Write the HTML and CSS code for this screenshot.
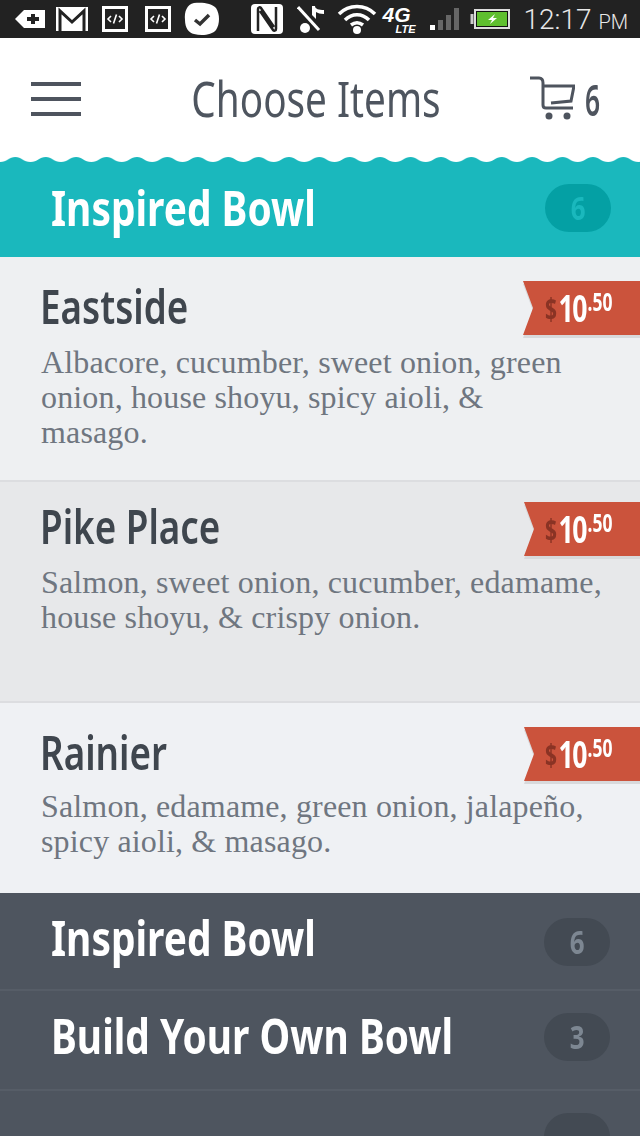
FILE: index.html
```html
<!DOCTYPE html>
<html lang="en">
<head>
    <meta charset="UTF-8">
    <meta name="viewport" content="width=device-width, initial-scale=1.0">
    <title>Choose Items</title>
    <link rel="stylesheet" href="styles.css">
</head>
<body>
    <div class="status">
        <div class="status-left">
            <svg class="ic-tag" width="32" height="22" viewBox="0 0 32 22"><path d="M1 11 10 2H31V20H10Z" fill="#fff"/><path d="M17 6h4v3h4v4h-4v3h-4v-3h-4V9h4z" fill="#222"/></svg>
            <svg class="ic-mail" width="32" height="26" viewBox="0 0 32 26"><rect width="32" height="24" y="1" fill="#fff"/><path d="M4 25V5L16 16 28 5V25" fill="none" stroke="#222" stroke-width="3"/></svg>
            <svg class="ic-code" width="26" height="26" viewBox="0 0 26 26"><rect x="1.500" y="1.500" width="23" height="23" fill="#222" stroke="#fff" stroke-width="3"/><path d="M9 10 6 13l3 3M17 10l3 3-3 3M14.500 8.500l-3 9" fill="none" stroke="#fff" stroke-width="1.600"/></svg>
            <svg class="ic-code2" width="26" height="26" viewBox="0 0 26 26"><rect x="1.500" y="1.500" width="23" height="23" fill="#222" stroke="#fff" stroke-width="3"/><path d="M9 10 6 13l3 3M17 10l3 3-3 3M14.500 8.500l-3 9" fill="none" stroke="#fff" stroke-width="1.600"/></svg>
            <svg class="ic-skype" width="36" height="34" viewBox="0 0 36 34"><path d="M10 1C18 0 28 1 32 6 36 12 36 22 32 28 28 33 18 34 10 32 5 31 1 26 1 18 0 10 3 2 10 1Z" fill="#fff"/><path d="M11 18l5 4 9-9" fill="none" stroke="#333" stroke-width="3.500"/></svg>
            <svg class="ic-nfc" width="34" height="32" viewBox="0 0 34 32"><rect x="1" y="1" width="32" height="30" rx="4" fill="#fff"/><path d="M8 28V6c0-2 2-2 3-1L24 24M26 4V26c0 2-2 2-3 1L10 8" fill="none" stroke="#222" stroke-width="2.500"/></svg>
            <svg class="ic-note" width="28" height="30" viewBox="0 0 28 30"><path d="M1 3 22 26" stroke="#fff" stroke-width="3"/><path d="M15 11V2h3c0 3 4 4 9 4v4c-4 0-6-1-8-2v7z" fill="#fff"/><circle cx="8" cy="24" r="5" fill="#fff"/></svg>
        </div>
        <div class="status-right">
            <svg class="wifi" width="40" height="30" viewBox="0 0 40 30"><path d="M2 10C12 0 28 0 38 10M8 16C15 9 25 9 32 16M14 21C18 18 22 18 26 21" fill="none" stroke="#fff" stroke-width="3.500"/><circle cx="20" cy="26" r="4" fill="#fff"/></svg>
            <div class="net"><span class="net-g">4G</span><span class="net-lte">LTE</span></div>
            <svg class="bars" width="36" height="26" viewBox="0 0 36 26"><rect x="1" y="19" width="5" height="5" fill="#fff"/><rect x="9" y="14" width="5" height="10" fill="#666"/><rect x="17" y="9" width="5" height="15" fill="#666"/><rect x="25" y="2" width="5" height="22" fill="#666"/></svg>
            <svg class="batt" width="40" height="20" viewBox="0 0 40 20"><path d="M2 5V15" stroke="#ccc" stroke-width="3"/><rect x="5" y="1" width="34" height="18" fill="#111" stroke="#ddd" stroke-width="2"/><rect x="7" y="3" width="30" height="14" fill="#5fbf2f"/><path d="M25 5 18 11h4l-2 4 7-6h-4z" fill="#fff"/></svg>
            <span class="time">12:17 <small>PM</small></span>
        </div>
    </div>

    <header class="topbar">
        <div class="burger"><i></i><i></i><i></i></div>
        <h1 class="cond title">Choose Items</h1>
        <div class="cart">
            <svg width="46" height="46" viewBox="0 0 46 46"><path d="M1 2H10C13 2 14 4 14 7V29C14 31 15 32 17 32H44M14 10H45L42 25 22 27" fill="none" stroke="#4e545e" stroke-width="3"/><circle cx="20" cy="40" r="3.500" fill="#4e545e"/><circle cx="38" cy="40" r="3.500" fill="#4e545e"/></svg>
            <span class="cart-count"><span class="cond">6</span></span>
        </div>
    </header>

    <section class="cat cat-active">
        <svg class="wave" width="640" height="6" viewBox="0 0 640 6">
            <defs>
                <pattern id="scallop" width="30.400" height="6" patternUnits="userSpaceOnUse" x="-15">
                    <path d="M0 0H30.400C24 0 22 5 15.200 5 8 5 6 0 0 0Z" fill="#fff"/>
                </pattern>
            </defs>
            <rect width="640" height="6" fill="url(#scallop)"/>
        </svg>
        <h2 class="cond cat-name">Inspired Bowl</h2>
        <span class="pill"><span class="cond">6</span></span>
    </section>

    <article class="item item-1">
        <div class="tag"><div class="price"><span class="cond amount"><span class="dollar">$</span><span class="big">10</span><span class="cents">.50</span></span></div></div>
        <h3 class="cond item-name">Eastside</h3>
        <p class="desc">Albacore, cucumber, sweet onion, green onion, house shoyu, spicy aioli, &amp; masago.</p>
    </article>
    <article class="item item-2">
        <div class="tag"><div class="price"><span class="cond amount"><span class="dollar">$</span><span class="big">10</span><span class="cents">.50</span></span></div></div>
        <h3 class="cond item-name">Pike Place</h3>
        <p class="desc">Salmon, sweet onion, cucumber, edamame, house shoyu, &amp; crispy onion.</p>
    </article>
    <article class="item item-3">
        <div class="tag"><div class="price"><span class="cond amount"><span class="dollar">$</span><span class="big">10</span><span class="cents">.50</span></span></div></div>
        <h3 class="cond item-name">Rainier</h3>
        <p class="desc">Salmon, edamame, green onion, jalapeño, spicy aioli, &amp; masago.</p>
    </article>

    <section class="cat cat-dark cat-first">
        <h2 class="cond cat-name">Inspired Bowl</h2>
        <span class="pill"><span class="cond">6</span></span>
    </section>
    <section class="cat cat-dark cat-second">
        <h2 class="cond cat-name">Build Your Own Bowl</h2>
        <span class="pill"><span class="cond">3</span></span>
    </section>
    <section class="cat cat-dark cat-last">
        <span class="pill"></span>
    </section>
</body>
</html>
```

FILE: styles.css
```css
* {
    box-sizing: border-box;
}

html, body {
    margin: 0;
    padding: 0;
}

body {
    width: 640px;
    height: 1136px;
    overflow: hidden;
    background: #4e555f;
    font-family: "Noto Sans", sans-serif;
}

h1, h2, h3, p {
    margin: 0;
}

/* no condensed face is installed, so squeeze the text */
.cond {
    display: inline-block;
    font-family: "Noto Sans", sans-serif;
    white-space: nowrap;
    transform: scaleX(0.81);
    transform-origin: left center;
}

/* status bar */
.status {
    height: 38px;
    background: #222;
    display: flex;
    justify-content: space-between;
    align-items: center;
    padding: 0 12px 0 14px;
    color: #fff;
}

.status-left, .status-right {
    display: flex;
    align-items: center;
}

.ic-mail {
    margin-left: 10px;
}

.ic-code {
    margin-left: 14px;
}

.ic-code2 {
    margin-left: 17px;
}

.ic-skype {
    margin-left: 13px;
}

.ic-nfc {
    margin-left: 30px;
}

.ic-note {
    margin-left: 13px;
}

.net {
    font-family: "Liberation Sans", sans-serif;
    font-style: italic;
    font-weight: 700;
    width: 34px;
    margin: 2px 0 0 6px;
}

.net-g {
    display: block;
    font-size: 21px;
    line-height: 18px;
}

.net-lte {
    display: block;
    font-size: 11px;
    line-height: 10px;
    padding-left: 13px;
}

.bars {
    margin-left: 12px;
}

.batt {
    margin-left: 5px;
}

.time {
    font: 300 28px Roboto, sans-serif;
    color: #e8e8e8;
    margin-left: 14px;
}

.time small {
    font-size: 20px;
}

/* header */
.topbar {
    height: 119px;
    background: #fff;
    display: flex;
    align-items: center;
    padding: 3px 41px 0 31px;
    position: relative;
}

.burger {
    width: 50px;
    display: flex;
    flex-direction: column;
    gap: 11px;
}

.burger i {
    display: block;
    height: 4px;
    background: #4e545e;
}

.title {
    flex: 1;
    text-align: center;
    font-size: 49px;
    font-weight: 400;
    color: #4e555f;
    transform: scaleX(0.79);
    transform-origin: center;
    margin: -2px 0 0 22px;
}

.cart {
    display: flex;
    align-items: center;
    gap: 10px;
}

.cart-count {
    width: 14px;
    font-size: 44px;
    font-weight: 600;
    color: #4e545e;
}

.cart-count .cond {
    transform: scaleX(0.6);
}

/* category rows */
.cat {
    display: flex;
    justify-content: space-between;
    align-items: center;
    padding: 0 30px 0 51px;
    position: relative;
}

.cat-active {
    height: 100px;
    background: #1ab8bd;
    padding-top: 2px;
    padding-right: 29px;
}

.wave {
    position: absolute;
    top: 0;
    left: 0;
}

.cat-name {
    font-size: 48px;
    font-weight: 700;
    color: #fff;
    margin-bottom: 2px;
}

.pill {
    flex: none;
    width: 66px;
    height: 48px;
    border-radius: 24px;
    text-align: center;
    font-size: 32px;
    font-weight: 700;
    line-height: 48px;
}

.pill .cond {
    transform-origin: center;
}

.cat-active .pill {
    background: #04a0a4;
    color: #1ab8bd;
}

.cat-dark {
    background: #4e555f;
    border-bottom: 2px solid #565d67;
}

.cat-first {
    height: 98px;
    padding-top: 2px;
}

.cat-first .cat-name {
    margin-bottom: 10px;
}

.cat-second {
    height: 100px;
    padding-bottom: 6px;
}

.cat-second .cat-name {
    margin: 0 -20px 4px 0;
}

.cat-dark .pill {
    background: #434a53;
    color: #7d8792;
}

.cat-last {
    height: 45px;
    border-bottom: 0;
    align-items: flex-start;
    padding-top: 22px;
    justify-content: flex-end;
}

/* menu items */
.item {
    position: relative;
    padding: 21px 0 0 41px;
    border-bottom: 2px solid #dcdde0;
}

.item-1 {
    height: 225px;
    background: #eef0f2;
}

.item-2 {
    height: 221px;
    background: #e7e8ea;
    padding-top: 16px;
}

.item-3 {
    height: 190px;
    background: #eff1f4;
    border-bottom: 0;
    padding-top: 21px;
}

.item-name {
    display: block;
    font-size: 46px;
    font-weight: 600;
    line-height: 56px;
    color: #3f464e;
    margin-left: -1px;
    transform: scaleX(0.8);
}

.desc {
    font-family: "Liberation Serif", serif;
    font-size: 32px;
    line-height: 35px;
    letter-spacing: 0.15px;
    color: #6f7680;
    margin-top: 11px;
}

.item-1 .desc {
    padding-right: 70px;
}

.item-3 .desc {
    margin-top: 9px;
}

.tag {
    position: absolute;
    top: 24px;
    right: 0;
    filter: drop-shadow(0 3px 0 #d8d9db);
}

.item-2 .tag {
    top: 20px;
}

.price {
    width: 117px;
    height: 54px;
    background: #cb533c;
    clip-path: polygon(0 0, 100% 0, 100% 100%, 0 100%, 10px 50%);
    padding-left: 22px;
    color: #fff;
}

.item-2 .price, .item-3 .price {
    width: 116px;
    padding-left: 21px;
}

.amount {
    transform: scaleX(0.7);
    display: flex;
    align-items: flex-start;
}

.dollar {
    font-size: 30px;
    font-weight: 700;
    color: #8a3324;
    line-height: 56px;
    margin-right: 2px;
}

.big {
    font-size: 38px;
    font-weight: 700;
    line-height: 52px;
    letter-spacing: -2px;
}

.cents {
    font-size: 25px;
    font-weight: 700;
    line-height: 40px;
    margin-left: 2px;
}
```
